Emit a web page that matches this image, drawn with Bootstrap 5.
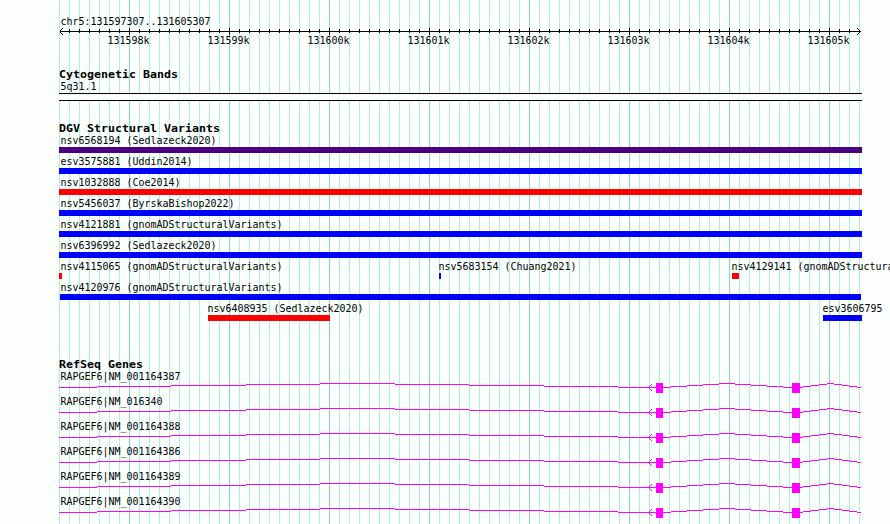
<!DOCTYPE html>
<html lang="en">
<head>
    <meta charset="UTF-8">
    <meta name="viewport" content="width=device-width, initial-scale=1.0">
    <title>chr5:131597307..131605307</title>
    <link href="https://cdn.jsdelivr.net/npm/bootstrap@5.3.0/dist/css/bootstrap.min.css" rel="stylesheet">
    <style>
        body {
            background-color: #fdfffc;
            color: #000;
            font-family: "DejaVu Sans Mono", "Liberation Mono", monospace;
            font-size: 11px;
            line-height: 13px;
        }
        .browser {
            width: 890px;
            height: 524px;
            padding: 15px 0 0 59px;
            background-image:
                repeating-linear-gradient(to right, transparent 0 70px, #87ceeb 70px 71px, transparent 71px 100px),
                repeating-linear-gradient(to right, #afeeee 0 1px, transparent 1px 10px);
            background-origin: content-box;
            background-clip: border-box;
            background-repeat: no-repeat;
            background-size: 801px 524px;
            background-position: 0 -15px;
        }
        /* glyphs squeezed to a 6px cell, headings widened to 7px */
        .cell-text {
            display: block;
            width: max-content;
            height: 13px;
            white-space: pre;
            transform: translateX(.5px) scaleX(.906);
            transform-origin: 0 0;
        }
        .track-title {
            height: 12px;
            font-size: 11px;
            font-weight: bold;
            line-height: 13px;
            width: max-content;
            transform: scaleX(1.057);
            transform-origin: 0 0;
        }
        .inset { margin-left: 1px; }
        .axis-labels {
            padding-left: 20px;
            margin-top: -1px;
        }
        .axis-labels > div {
            flex: none;
            width: 100px;
            padding-left: 28px;
        }
        .cyto { margin-top: 21px; }
        .cyto-band {
            width: 803px;
            height: 8px;
            background-color: #fdfffc;
            border-top: 1px solid #000;
            border-bottom: 1px solid #000;
        }
        .dgv { margin-top: 21px; }
        .lane { height: 21px; }
        .feature {
            position: absolute;
            top: 0;
        }
        .feature-bar {
            height: 6px;
        }
        .bg-gain { background-color: #0000ff; }
        .bg-loss { background-color: #ff0000; }
        .bg-mixed { background-color: #4b0082; }
        .refseq { margin-top: 35px; }
        .gene { height: 25px; }
        svg {
            display: block;
            shape-rendering: crispEdges;
        }
    </style>
</head>
<body>
    <main class="browser overflow-hidden">
        <header>
            <span class="cell-text inset">chr5:131597307..131605307</span>
            <svg id="axis" width="803" height="7" viewBox="0 0 803 7"></svg>
            <div class="axis-labels d-flex" id="axis-labels"></div>
        </header>

        <section class="cyto">
            <h2 class="track-title mb-0">Cytogenetic Bands</h2>
            <span class="cell-text inset">5q31.1</span>
            <div class="cyto-band"></div>
        </section>

        <section class="dgv">
            <h2 class="track-title mb-0">DGV Structural Variants</h2>
            <div id="variants"></div>
        </section>

        <section class="refseq">
            <h2 class="track-title mb-0">RefSeq Genes</h2>
            <div id="genes"></div>
        </section>
    </main>

    <script>
        // ruler: a tick every 100 bp (10px), a taller one every kb
        let ruler = '<path d="M1 3h801v1H1z"/>';
        for (let x = 10; x <= 790; x += 10) {
            ruler += x % 100 === 70
                ? `<path d="M${x} 0h1v7h-1z"/>`
                : `<path d="M${x} 1h1v4h-1z"/>`;
        }
        for (let i = 1; i <= 3; i++) {
            ruler += `<path d="M${i} ${3 - i}h1v1h-1zM${i} ${3 + i}h1v1h-1z"/>`;
            ruler += `<path d="M${801 - i} ${3 - i}h1v1h-1zM${801 - i} ${3 + i}h1v1h-1z"/>`;
        }
        document.getElementById("axis").innerHTML = ruler;

        for (let kb = 131598; kb <= 131605; kb++) {
            document.getElementById("axis-labels").innerHTML +=
                `<div><span class="cell-text">${kb}k</span></div>`;
        }

        // each lane: [label, type, label x, bar x, bar width]
        const lanes = [
            [["nsv6568194 (Sedlazeck2020)", "mixed", 1, 0, 803]],
            [["esv3575881 (Uddin2014)", "gain", 1, 0, 803]],
            [["nsv1032888 (Coe2014)", "loss", 1, 0, 803]],
            [["nsv5456037 (ByrskaBishop2022)", "gain", 1, 0, 803]],
            [["nsv4121881 (gnomADStructuralVariants)", "gain", 1, 0, 803]],
            [["nsv6396992 (Sedlazeck2020)", "gain", 1, 0, 803]],
            [
                ["nsv4115065 (gnomADStructuralVariants)", "loss", 1, 0, 3],
                ["nsv5683154 (Chuang2021)", "gain", 379, 380, 2],
                ["nsv4129141 (gnomADStructuralVariants)", "loss", 672, 673, 7]
            ],
            [["nsv4120976 (gnomADStructuralVariants)", "gain", 1, 1, 801]],
            [
                ["nsv6408935 (Sedlazeck2020)", "loss", 148, 149, 122],
                ["esv3606795", "gain", 763, 764, 39]
            ]
        ];
        document.getElementById("variants").innerHTML = lanes.map(lane => `
            <div class="lane position-relative">
                ${lane.map(([name, type, labelX, x, width]) => `
                    <div class="feature" style="left: ${x}px">
                        <span class="cell-text" style="margin-left: ${labelX - x}px">${name}</span>
                        <div class="feature-bar bg-${type}" style="width: ${width}px"></div>
                    </div>`).join("")}
            </div>`).join("");

        // intron steps: [start, end, y], exons drawn over them
        const introns = [
            [0, 38, 4], [38, 112, 3], [112, 187, 2], [187, 261, 1], [261, 336, 0],
            [336, 410, 1], [410, 485, 2], [485, 559, 3], [559, 597, 4],
            [604, 612, 4], [612, 628, 3], [628, 644, 2], [644, 660, 1], [660, 676, 0],
            [676, 692, 1], [692, 708, 2], [708, 724, 3], [724, 733, 4],
            [741, 744, 4], [744, 752, 3], [752, 760, 2], [760, 768, 1], [768, 775, 0],
            [775, 783, 1], [783, 790, 2], [790, 798, 3], [798, 802, 4]
        ];
        const model = introns.map(([a, b, y]) => `<path d="M${a} ${y}H${b}v1H${a}z"/>`).join("") +
            '<path d="M597 0h7v10h-7zM733 0h8v10h-8z"/>' +
            '<path d="M590 3h1v1h-1zM591 2h1v1h-1zM592 1h1v1h-1zM590 5h1v1h-1zM591 6h1v1h-1zM592 7h1v1h-1z"/>';

        const genes = ["NM_001164387", "NM_016340", "NM_001164388", "NM_001164386", "NM_001164389", "NM_001164390"];
        document.getElementById("genes").innerHTML = genes.map(id => `
            <div class="gene">
                <span class="cell-text inset">RAPGEF6|${id}</span>
                <svg width="803" height="10" viewBox="0 0 803 10" fill="#ff00ff">${model}</svg>
            </div>`).join("");
    </script>
    <script src="https://cdn.jsdelivr.net/npm/bootstrap@5.3.0/dist/js/bootstrap.bundle.min.js"></script>
</body>
</html>
